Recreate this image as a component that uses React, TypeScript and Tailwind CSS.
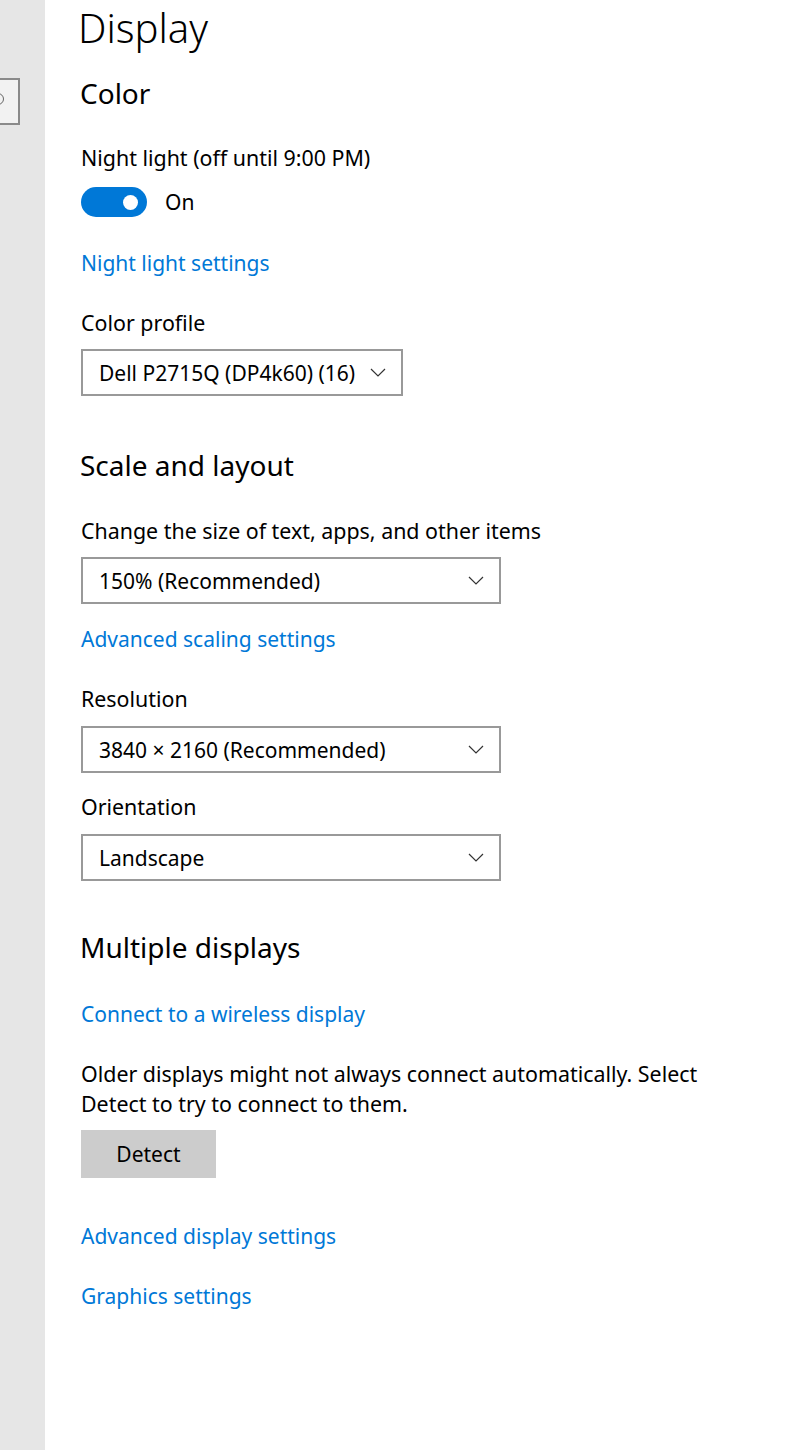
import { ReactNode } from "react";

const font = { fontFamily: '"Noto Sans", "Open Sans", sans-serif' };

function Chevron() {
  return (
    <svg width="16" height="9" viewBox="0 0 16 9" className="shrink-0">
      <path d="M1 1l7 7 7-7" fill="none" stroke="#333" strokeWidth="1.2" />
    </svg>
  );
}

function Select({ value, wide = true }: { value: string; wide?: boolean }) {
  return (
    <div
      className={`flex h-[47px] items-center justify-between border-2 border-[#999999] bg-white pl-[16px] pr-[15px] text-[21px] text-black ${
        wide ? "w-[420px]" : "w-[322px] gap-[14px]"
      }`}
    >
      <span className="leading-[30px]">{value}</span>
      <Chevron />
    </div>
  );
}

function Link({ children, className = "" }: { children: ReactNode; className?: string }) {
  return (
    <a href="#" className={`block text-[21px] leading-[30px] text-[#0078d7] ${className}`}>
      {children}
    </a>
  );
}

function Label({ children, className = "" }: { children: ReactNode; className?: string }) {
  return <div className={`text-[21.4px] leading-[30px] text-black ${className}`}>{children}</div>;
}

function Heading({ children, className = "" }: { children: ReactNode; className?: string }) {
  return (
    <h2 className={`ml-[-1px] text-[28px] leading-[36px] font-normal text-black ${className}`}>
      {children}
    </h2>
  );
}

export default function App() {
  return (
    <div className="flex h-[1450px] w-full overflow-hidden bg-white" style={font}>
      {/* nav pane, mostly scrolled out of view */}
      <aside className="w-[45px] shrink-0 bg-[#e6e6e6] pt-[78px]">
        <div className="relative ml-[-30px] h-[47px] w-[50px] border-2 border-[#8a8a8a] bg-[#f2f2f2]">
          <span className="absolute left-[20px] top-[13px] h-[12px] w-[12px] rounded-full border-[1.5px] border-[#666]" />
        </div>
      </aside>

      <main className="flex-1 pl-[36px]">
        <h1 className="ml-[-3px] text-[40px] leading-[56px] font-light text-black">Display</h1>

        <Heading className="mt-[19px]">Color</Heading>
        <Label className="mt-[32px]">Night light (off until 9:00 PM)</Label>
        <div className="mt-[14px] flex h-[30px] items-center gap-[18px]">
          <div className="flex h-[30px] w-[66px] items-center justify-end rounded-full bg-[#0078d7] pr-[9px]">
            <span className="h-[15px] w-[15px] rounded-full bg-white" />
          </div>
          <span className="text-[21px] leading-[30px]">On</span>
        </div>
        <Link className="mt-[31px]">Night light settings</Link>
        <Label className="mt-[30px]">Color profile</Label>
        <div className="mt-[11px]">
          <Select value="Dell P2715Q (DP4k60) (16)" wide={false} />
        </div>

        <Heading className="mt-[51px]">Scale and layout</Heading>
        <Label className="mt-[33px]">Change the size of text, apps, and other items</Label>
        <div className="mt-[11px]">
          <Select value="150% (Recommended)" />
        </div>
        <Link className="mt-[20px]">Advanced scaling settings</Link>
        <Label className="mt-[30px]">Resolution</Label>
        <div className="mt-[12px]">
          <Select value="3840 × 2160 (Recommended)" />
        </div>
        <Label className="mt-[19px]">Orientation</Label>
        <div className="mt-[12px]">
          <Select value="Landscape" />
        </div>

        <Heading className="mt-[48px]">Multiple displays</Heading>
        <Link className="mt-[34px]">Connect to a wireless display</Link>
        <Label className="mt-[30px] w-[640px]">
          Older displays might not always connect automatically. Select Detect to try to connect to them.
        </Label>
        <button
          type="button"
          className="mt-[11px] block h-[48px] w-[135px] bg-[#cccccc] text-[21px] leading-[30px] text-black"
        >
          Detect
        </button>
        <Link className="mt-[43px]">Advanced display settings</Link>
        <Link className="mt-[30px]">Graphics settings</Link>
      </main>
    </div>
  );
}
